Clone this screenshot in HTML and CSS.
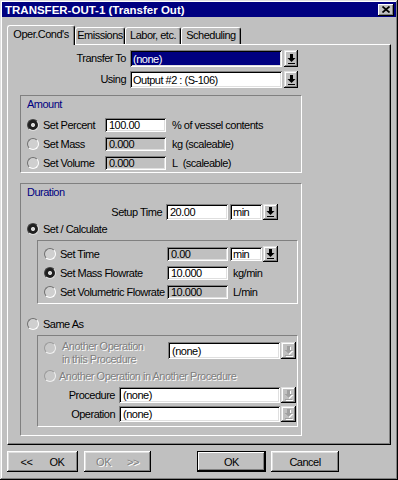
FILE: index.html
```html
<!DOCTYPE html>
<html>
<head>
<meta charset="utf-8">
<link rel="stylesheet" href="styles.css">
</head>
<body>
<div class="window">
  <div class="titlebar">
    <span class="title">TRANSFER-OUT-1 (Transfer Out)</span>
    <span class="close"><svg width="8" height="7" viewBox="0 0 8 7"><path d="M0.5 0.5L7.5 6.5M7.5 0.5L0.5 6.5" stroke="#000" stroke-width="1.7"/></svg></span>
  </div>
  <div class="tabs">
    <div class="tab active t1">Oper.Cond's</div>
    <div class="tab t2">Emissions</div>
    <div class="tab t3">Labor, etc.</div>
    <div class="tab t4">Scheduling</div>
  </div>
  <div class="panel">
    <div class="frow first">
      <span class="flabel">Transfer To</span>
      <div class="box select-main focus">(none)</div>
      <div class="dbtn"><svg width="9" height="10" viewBox="0 0 9 10"><path d="M3 0h3v4h2.5L4.5 8 0.5 4H3z" fill="#000"/><rect x="1" y="9" width="7" height="1" fill="#000"/></svg></div>
    </div>
    <div class="frow second">
      <span class="flabel">Using</span>
      <div class="box select-main">Output #2 : (S-106)</div>
      <div class="dbtn"><svg width="9" height="10" viewBox="0 0 9 10"><path d="M3 0h3v4h2.5L4.5 8 0.5 4H3z" fill="#000"/><rect x="1" y="9" width="7" height="1" fill="#000"/></svg></div>
    </div>

    <div class="group amount">
      <div class="gtitle">Amount</div>
      <div class="arow"><span class="radio on"></span><span class="alabel">Set Percent</span><div class="box ainput">100.00</div><span class="unit">% of vessel contents</span></div>
      <div class="arow"><span class="radio"></span><span class="alabel">Set Mass</span><div class="box ainput dis">0.000</div><span class="unit">kg (scaleable)</span></div>
      <div class="arow"><span class="radio"></span><span class="alabel">Set Volume</span><div class="box ainput dis">0.000</div><span class="unit">L<span class="gap">(scaleable)</span></span></div>
    </div>

    <div class="group duration">
      <div class="gtitle">Duration</div>
      <div class="setup">
        <span class="slabel">Setup Time</span>
        <div class="box dinput tall">20.00</div>
        <div class="box unitsel tall">min</div>
        <div class="dbtn small"><svg width="9" height="10" viewBox="0 0 9 10"><path d="M3 0h3v4h2.5L4.5 8 0.5 4H3z" fill="#000"/><rect x="1" y="9" width="7" height="1" fill="#000"/></svg></div>
      </div>
      <div class="rrow"><span class="radio on"></span><span class="rlabel">Set / Calculate</span></div>
      <div class="inner calc">
        <div class="crow"><span class="radio"></span><span class="clabel">Set Time</span><div class="box dinput dis">0.00</div><div class="box unitsel">min</div><div class="dbtn small"><svg width="9" height="10" viewBox="0 0 9 10"><path d="M3 0h3v4h2.5L4.5 8 0.5 4H3z" fill="#000"/><rect x="1" y="9" width="7" height="1" fill="#000"/></svg></div></div>
        <div class="crow"><span class="radio on"></span><span class="clabel">Set Mass Flowrate</span><div class="box dinput">10.000</div><span class="cunit">kg/min</span></div>
        <div class="crow"><span class="radio"></span><span class="clabel">Set Volumetric Flowrate</span><div class="box dinput dis">10.000</div><span class="cunit">L/min</span></div>
      </div>
      <div class="rrow same"><span class="radio"></span><span class="rlabel">Same As</span></div>
      <div class="inner sameas">
        <div class="orow">
          <span class="radio off"></span>
          <span class="olabel etched">Another Operation<br>in this Procedure</span>
          <div class="box osel">(none)</div>
          <div class="dbtn osbtn disabled"><svg width="9" height="10" viewBox="0 0 9 10"><path d="M3 0h3v4h2.5L4.5 8 0.5 4H3z" fill="#a0a0a0"/><rect x="1" y="9" width="7" height="1" fill="#a0a0a0"/></svg></div>
        </div>
        <div class="orow2"><span class="radio off"></span><span class="o2label etched">Another Operation in Another Procedure</span></div>
        <div class="prow">
          <span class="plabel">Procedure</span>
          <div class="box psel">(none)</div>
          <div class="dbtn pbtn disabled"><svg width="9" height="10" viewBox="0 0 9 10"><path d="M3 0h3v4h2.5L4.5 8 0.5 4H3z" fill="#a0a0a0"/><rect x="1" y="9" width="7" height="1" fill="#a0a0a0"/></svg></div>
        </div>
        <div class="prow op">
          <span class="plabel">Operation</span>
          <div class="box psel">(none)</div>
          <div class="dbtn pbtn disabled"><svg width="9" height="10" viewBox="0 0 9 10"><path d="M3 0h3v4h2.5L4.5 8 0.5 4H3z" fill="#a0a0a0"/><rect x="1" y="9" width="7" height="1" fill="#a0a0a0"/></svg></div>
        </div>
      </div>
    </div>
  </div>
  <div class="footer">
    <div class="btn b1"><span>&lt;&lt;</span><span>OK</span></div>
    <div class="btn b2 etched"><span>OK</span><span>&gt;&gt;</span></div>
    <div class="btn b3 default"><span>OK</span></div>
    <div class="btn b4"><span>Cancel</span></div>
  </div>
</div>
</body>
</html>
```

FILE: styles.css
```css
* { box-sizing: border-box; }
html, body { margin: 0; padding: 0; }
body {
  width: 398px;
  height: 480px;
  background: #c0c0c0;
  font-family: "Liberation Sans", Arial, sans-serif;
  font-size: 11px;
  letter-spacing: -0.5px;
  color: #000;
  overflow: hidden;
}
.window {
  width: 398px;
  height: 480px;
  padding: 2px;
  background: #c0c0c0;
  box-shadow: inset -1px -1px #000, inset 1px 1px #dfdfdf, inset -2px -2px #808080, inset 2px 2px #fff;
}
.titlebar {
  height: 15px;
  background: #000080;
  display: flex;
  align-items: center;
  padding-left: 3px;
}
.title {
  color: #fff;
  font-weight: bold;
  letter-spacing: 0;
  font-size: 11.5px;
}
.close {
  margin-left: auto;
  margin-right: 2px;
  width: 16px;
  height: 12px;
  background: #c0c0c0;
  display: flex;
  align-items: center;
  justify-content: center;
  box-shadow: inset -1px -1px #000, inset 1px 1px #fff, inset -2px -2px #808080;
}
.close svg { display: block; }

/* tabs */
.tabs {
  margin-top: 8px;
  margin-left: 5px;
  height: 19px;
  display: flex;
  align-items: flex-end;
}
.tab {
  height: 17px;
  line-height: 15px;
  text-align: center;
  border-top: 1px solid #fff;
  border-left: 1px solid #fff;
  border-right: 1px solid #000;
  border-radius: 3px 3px 0 0;
  box-shadow: inset -1px 0 #808080;
  background: #c0c0c0;
}
.tab.active {
  height: 20px;
  line-height: 17px;
  margin-bottom: -1px;
  position: relative;
  z-index: 1;
}
.t1 { width: 68px; }
.t2 { width: 50px; }
.t3 { width: 56px; }
.t4 { width: 60px; }

.panel {
  margin-left: 5px;
  width: 384px;
  height: 401px;
  border-top: 1px solid #fff;
  border-left: 1px solid #fff;
  border-right: 1px solid #000;
  border-bottom: 1px solid #000;
  box-shadow: inset -1px -1px #808080;
}

/* generic box (input / select) */
.box {
  background: #fff;
  box-shadow: inset 1px 1px #808080, inset -1px -1px #fff, inset 2px 2px #000, inset -2px -2px #dfdfdf;
  padding-left: 4px;
  display: flex;
  align-items: center;
  white-space: nowrap;
  overflow: hidden;
}
.box.dis { background: #c0c0c0; }
.dbtn {
  background: #c0c0c0;
  box-shadow: inset -1px -1px #000, inset 1px 1px #dfdfdf, inset -2px -2px #808080, inset 2px 2px #fff;
  display: flex;
  align-items: center;
  justify-content: center;
}
.dbtn svg { display: block; }
.dbtn.disabled svg { filter: drop-shadow(1px 1px 0 #fff); }

.frow { display: flex; height: 17px; align-items: stretch; }
.frow.first { margin-top: 5px; }
.frow.second { margin-top: 4px; }
.flabel { width: 122px; text-align: right; padding-right: 4px; line-height: 17px; }
.select-main { width: 152px; padding-left: 3px; }
.select-main.focus {
  background: #000080;
  color: #fff;
}
.frow .dbtn { width: 14px; margin-left: 2px; }

/* groups */
.group {
  margin-left: 12px;
  width: 282px;
  border-top: 1px solid #808080;
  border-left: 1px solid #808080;
  border-right: 1px solid #fff;
  border-bottom: 1px solid #fff;
}
.amount { margin-top: 7px; }
.duration { margin-top: 10px; padding-bottom: 8px; }
.gtitle {
  height: 16px;
  line-height: 16px;
  padding-left: 6px;
  color: #000080;
}
.amount .gtitle { margin-bottom: 3px; }

.radio {
  width: 12px;
  height: 12px;
  flex: none;
  border-radius: 50%;
  border: 1px solid;
  border-color: #707070 #fff #fff #707070;
  background: #cfcfcf;
}
.radio.on {
  border-color: #404040 #e0e0e0 #e0e0e0 #404040;
  background: radial-gradient(circle, #d8d8d8 0 1.6px, #202020 2.4px 100%);
}
.radio.off {
  border-color: #9a9a9a #f0f0f0 #f0f0f0 #9a9a9a;
  background: #c8c8c8;
}

.arow { display: flex; align-items: center; height: 19px; padding-left: 6px; }
.alabel { width: 62px; margin-left: 4px; }
.ainput { width: 61px; height: 14px; }
.unit { margin-left: 6px; }
.gap { margin-left: 5px; }

.setup { display: flex; align-items: center; height: 19px; margin-top: 2px; }
.slabel { width: 145px; text-align: right; padding-right: 4px; }
.dinput { width: 61px; height: 14px; }
.setup .dinput { width: 62px; }
.tall { height: 16px; }
.unitsel { width: 32px; height: 14px; margin-left: 2px; padding-left: 3px; }
.unitsel.tall { height: 16px; }
.dbtn.small { width: 15px; height: 16px; margin-left: 1px; }

.rrow { display: flex; align-items: center; height: 15px; padding-left: 6px; }
.rlabel { margin-left: 4px; }
.rrow.same { margin-top: 12px; }

.inner {
  margin-left: 16px;
  width: 261px;
  margin-top: 4px;
  border-top: 1px solid #808080;
  border-left: 1px solid #808080;
  border-right: 1px solid #fff;
  border-bottom: 1px solid #fff;
}
.calc { padding-top: 3px; padding-bottom: 2px; }
.crow { display: flex; align-items: center; height: 19px; padding-left: 6px; }
.clabel { width: 107px; margin-left: 4px; white-space: nowrap; }
.cunit { margin-left: 5px; }

.sameas { padding-top: 4px; padding-bottom: 4px; }
.etched { color: #808080; text-shadow: 1px 1px 0 #fff; }
.orow { display: flex; align-items: flex-start; height: 26px; padding-left: 6px; }
.orow .radio { margin-top: 2px; }
.olabel { width: 106px; margin-left: 6px; line-height: 13px; }
.osel { width: 112px; height: 17px; margin-top: 2px; }
.osbtn { width: 15px; height: 17px; margin-top: 2px; margin-left: 1px; }
.orow2 { display: flex; align-items: center; height: 18px; margin-top: 1px; padding-left: 6px; }
.o2label { margin-left: 3px; white-space: nowrap; }
.prow { display: flex; align-items: stretch; height: 16px; margin-top: 2px; }
.prow.op { margin-top: 3px; }
.plabel { width: 81px; text-align: right; padding-right: 4px; line-height: 16px; }
.psel { width: 161px; }
.pbtn { width: 15px; margin-left: 1px; }

/* footer buttons */
.footer { display: flex; margin-top: 6px; padding-left: 5px; }
.btn {
  height: 21px;
  display: flex;
  align-items: center;
  justify-content: center;
  background: #c0c0c0;
  box-shadow: inset -1px -1px #000, inset 1px 1px #fff, inset -2px -2px #808080, inset 2px 2px #dfdfdf;
}
.b1 { width: 71px; gap: 17px; }
.b2 { width: 67px; margin-left: 6px; gap: 16px; }
.b3 { width: 69px; margin-left: 46px; }
.b4 { width: 68px; margin-left: 5px; }
.btn.default {
  box-shadow: inset 0 0 0 1px #000, inset -2px -2px #000, inset 2px 2px #fff, inset -3px -3px #808080;
}
```
